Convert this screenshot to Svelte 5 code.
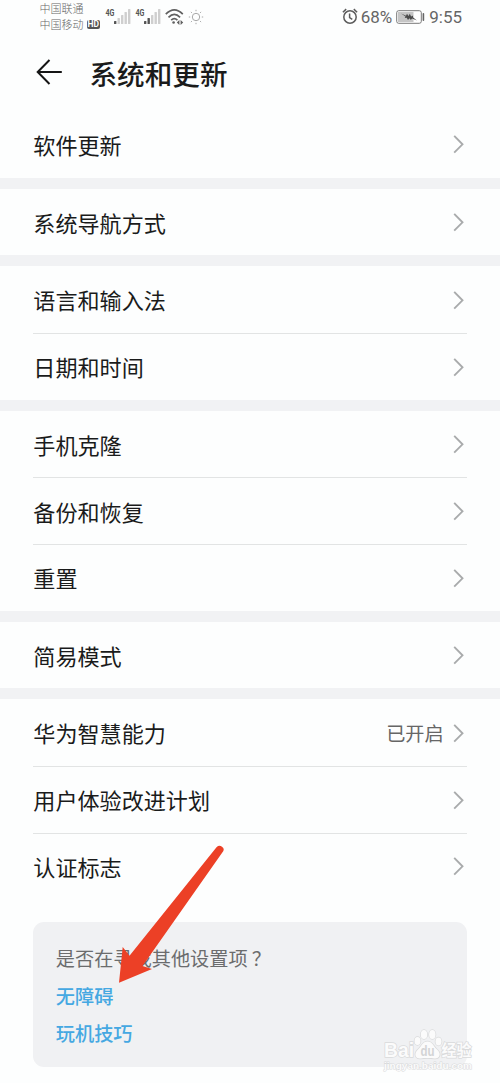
<script lang="ts">
  interface Item {
    label: string;
    value?: string;
  }

  // Each group is separated by a grey band
  const groups: Item[][] = [
    [{ label: '软件更新' }],
    [{ label: '系统导航方式' }],
    [{ label: '语言和输入法' }, { label: '日期和时间' }],
    [{ label: '手机克隆' }, { label: '备份和恢复' }, { label: '重置' }],
    [{ label: '简易模式' }],
    [
      { label: '华为智慧能力', value: '已开启' },
      { label: '用户体验改进计划' },
      { label: '认证标志' },
    ],
  ];

  const suggestions = ['无障碍', '玩机技巧'];
</script>

{#snippet signal(bars: number)}
  <svg class="signal" width="26" height="20" viewBox="0 0 26 20">
    <text x="0.5" y="10.5" textLength="9" lengthAdjust="spacingAndGlyphs">4G</text>
    {#each [3, 6, 9, 12, 15] as height, i}
      <rect
        x={9 + i * 3.5}
        y={19 - height}
        width="2.4"
        {height}
        rx="0.5"
        fill={i < bars ? '#555' : '#cfcfcf'}
      />
    {/each}
  </svg>
{/snippet}

<div class="screen">
  <div class="status-bar">
    <div class="carriers">
      <span>中国联通</span>
      <span class="carrier">中国移动 <b class="hd">HD</b></span>
    </div>
    <div class="network">
      {@render signal(1)}
      {@render signal(2)}
      <svg class="wifi" width="20" height="18" viewBox="0 0 20 18" fill="none" stroke="#606060" stroke-width="1.7">
        <path d="M.8 6.2Q9.3-2.4 17.8 6.2"></path>
        <path d="M3.5 9.3Q9.3 3.6 15.1 9.3"></path>
        <path d="M6.2 12.2Q9.3 9.2 12.4 12.2"></path>
        <circle cx="8.6" cy="14.5" r="1.3" fill="#606060" stroke="none"></circle>
        <path d="M14.400 12v5L11.800 14.500zM15.600 12v5l2.600-2.500z" fill="#606060" stroke="none"></path>
      </svg>
      <svg class="sun" width="16" height="16" viewBox="0 0 16 16" fill="none" stroke="#a8a8a8">
        <circle cx="8" cy="8" r="3.7"></circle>
        <path d="M8 .8v1.4M8 13.8v1.4M.8 8h1.4M13.8 8h1.4M2.9 2.9l1 1M12.1 12.1l1 1M2.9 13.1l1-1M12.1 3.9l1-1"></path>
      </svg>
    </div>
    <div class="system">
      <svg class="alarm" width="16" height="17" viewBox="0 0 16 17" fill="none" stroke="#5c5c5c" stroke-width="1.5">
        <circle cx="8" cy="9" r="6.2"></circle>
        <path d="M7.6 5.5v4l2.7 1.8M.9 4.2L4.2 1.1M11.8 1.1L15.1 4.2"></path>
      </svg>
      <span class="percent">68%</span>
      <svg class="battery" width="30" height="14" viewBox="0 0 30 14">
        <rect x=".7" y=".7" width="24.6" height="12.6" rx="2" fill="#fff" stroke="#777" stroke-width="1"></rect>
        <rect x="2" y="2" width="15.5" height="10" fill="#c5c5c5"></rect>
        <path d="M5 3.6l5 2.2 1-2 1.5 2.3 1.3-2.3 1.3 2.6 2-.8-.2 1.6 4 3.2-4.8-2-1.3 1.6-1.3-1.8-1.5 1.8-1.3-2.2-2 .2.8-1.5z" fill="#4b4b4b"></path>
        <rect x="26.6" y="3" width="1.6" height="8" rx=".8" fill="#666"></rect>
      </svg>
      <span class="clock">9:55</span>
    </div>
  </div>

  <header>
    <svg class="back" width="28" height="28" viewBox="0 0 28 28" fill="none" stroke="#151515" stroke-width="2">
      <path d="M26.8 14H3M14.5 2L2.7 14l11.8 12"></path>
    </svg>
    <h1>系统和更新</h1>
  </header>

  <main>
    {#each groups as group}
      <section>
        {#each group as item}
          <div class="row">
            <span class="label">{item.label}</span>
            {#if item.value}
              <span class="value">{item.value}</span>
            {/if}
            <svg class="chevron" width="11" height="20" viewBox="0 0 11 20" fill="none" stroke="#a9abac" stroke-width="1.9">
              <path d="M1.2 1.9L9.5 10.3 1.2 18.7"></path>
            </svg>
          </div>
        {/each}
      </section>
    {/each}
  </main>

  <aside>
    <p>是否在寻找其他设置项<span class="question">？</span></p>
    {#each suggestions as suggestion}
      <span class="link">{suggestion}</span>
    {/each}
  </aside>

  <svg class="pointer" width="110" height="142" viewBox="0 0 110 142">
    <path d="M4 137.7L7.7 102l6.8 8.7L101.5 2.2Q104.3-.3 107 1.8T108.2 6.2L27.5 121l9.5 3z" fill="#ec4026"></path>
  </svg>

  <svg class="watermark" width="104" height="50" viewBox="0 0 104 50">
    <g class="mark">
      <text x="4" y="29" font-size="20" textLength="30" lengthAdjust="spacingAndGlyphs">Bai</text>
      <ellipse cx="37.5" cy="13" rx="3" ry="4"></ellipse>
      <ellipse cx="44" cy="6.5" rx="3.2" ry="4.5"></ellipse>
      <ellipse cx="52.3" cy="6.5" rx="3.2" ry="4.5"></ellipse>
      <ellipse cx="58.5" cy="13.5" rx="3" ry="4"></ellipse>
      <path d="M47.5 13.5c5 0 6 5 9 7.5 6 5 2.5 10-2 9.5-4-.6-10-.6-14 0-5 .5-7.5-5-2-9.5 3-2.5 4-7.5 9-7.5z"></path>
      <text class="du" x="40.5" y="28" font-size="14" textLength="14" lengthAdjust="spacingAndGlyphs">du</text>
      <text x="61.5" y="28" font-size="15.5" textLength="30" lengthAdjust="spacingAndGlyphs">经验</text>
      <text class="url" x="4" y="41" font-size="9.5" textLength="88" lengthAdjust="spacingAndGlyphs">jingyan.baidu.com</text>
    </g>
  </svg>
</div>

<style>
  :global(body) {
    background: #fdfefe;
  }

  .screen {
    position: relative;
    box-sizing: border-box;
    width: 500px;
    height: 1083px;
    overflow: hidden;
    color: #1a1b1b;
    background: #fdfefe;
    font-family: 'Noto Sans CJK SC', sans-serif;
  }

  .status-bar {
    display: flex;
    box-sizing: border-box;
    height: 36px;
    padding: 1px 38px 0 39.5px;
    color: #666;
  }

  .carriers {
    display: flex;
    flex-direction: column;
    width: 65px;
    font-size: 11px;
    font-weight: 300;
    line-height: 15.5px;
  }

  .carrier {
    display: flex;
    align-items: center;
    gap: 3px;
  }

  .hd {
    padding: 0 1px;
    border-radius: 2px;
    color: #fff;
    background: #555;
    font-family: Roboto, sans-serif;
    font-size: 8.5px;
    font-weight: 700;
    line-height: 9px;
  }

  .network {
    display: flex;
    align-items: flex-start;
    gap: 4px;
    padding-top: 4px;
  }

  .signal text {
    fill: #555;
    font: 700 9.5px Roboto, sans-serif;
  }

  .wifi {
    margin-top: 3px;
  }

  .sun {
    margin-top: 4px;
    margin-left: -1px;
  }

  .system {
    display: flex;
    align-items: center;
    height: 31px;
    margin-left: auto;
    font-family: Roboto, sans-serif;
    font-size: 17px;
  }

  .percent {
    margin: 0 4px 0 3px;
  }

  .clock {
    margin-left: 3px;
  }

  header {
    display: flex;
    align-items: center;
    box-sizing: border-box;
    height: 75.1px;
    padding: 0 0 3px 35px;
  }

  h1 {
    margin: 2px 0 0 26.5px;
    font-size: 27.6px;
    font-weight: 500;
    line-height: 40px;
  }

  section + section {
    border-top: 11.11px solid #f1f2f4;
  }

  .row {
    display: flex;
    align-items: center;
    box-sizing: border-box;
    height: 66.67px;
    margin: 0 33.3px;
    padding-right: 3px;
  }

  .row + .row {
    border-top: 1px solid #e2e4e4;
  }

  .label {
    flex: 1;
    padding-bottom: 1px;
    font-size: 22.1px;
  }

  .value {
    margin-right: 9px;
    color: #666;
    font-size: 19.2px;
  }

  aside {
    display: flex;
    flex-direction: column;
    box-sizing: border-box;
    height: 145px;
    margin: 22.2px 33.3px 0;
    padding: 18.5px 22.5px;
    border-radius: 11px;
    background: #f0f1f3;
    font-size: 19.2px;
    line-height: 37.5px;
  }

  p {
    margin: 0;
    color: #6b6c6d;
  }

  .question {
    margin-left: 4px;
  }

  .link {
    color: #45a8e2;
    font-weight: 500;
  }

  .pointer {
    position: absolute;
    top: 845px;
    left: 115px;
  }

  .watermark {
    position: absolute;
    top: 1028px;
    left: 380px;
  }

  .mark {
    fill: #fbfbfb;
    stroke: #d9dadb;
    stroke-width: 1.5;
    paint-order: stroke;
    font-family: 'Liberation Sans', 'Noto Sans CJK SC', sans-serif;
    font-weight: 700;
  }

  .du {
    fill: #d3d4d5;
    stroke: none;
  }

  .url {
    stroke-width: 1;
  }
</style>
